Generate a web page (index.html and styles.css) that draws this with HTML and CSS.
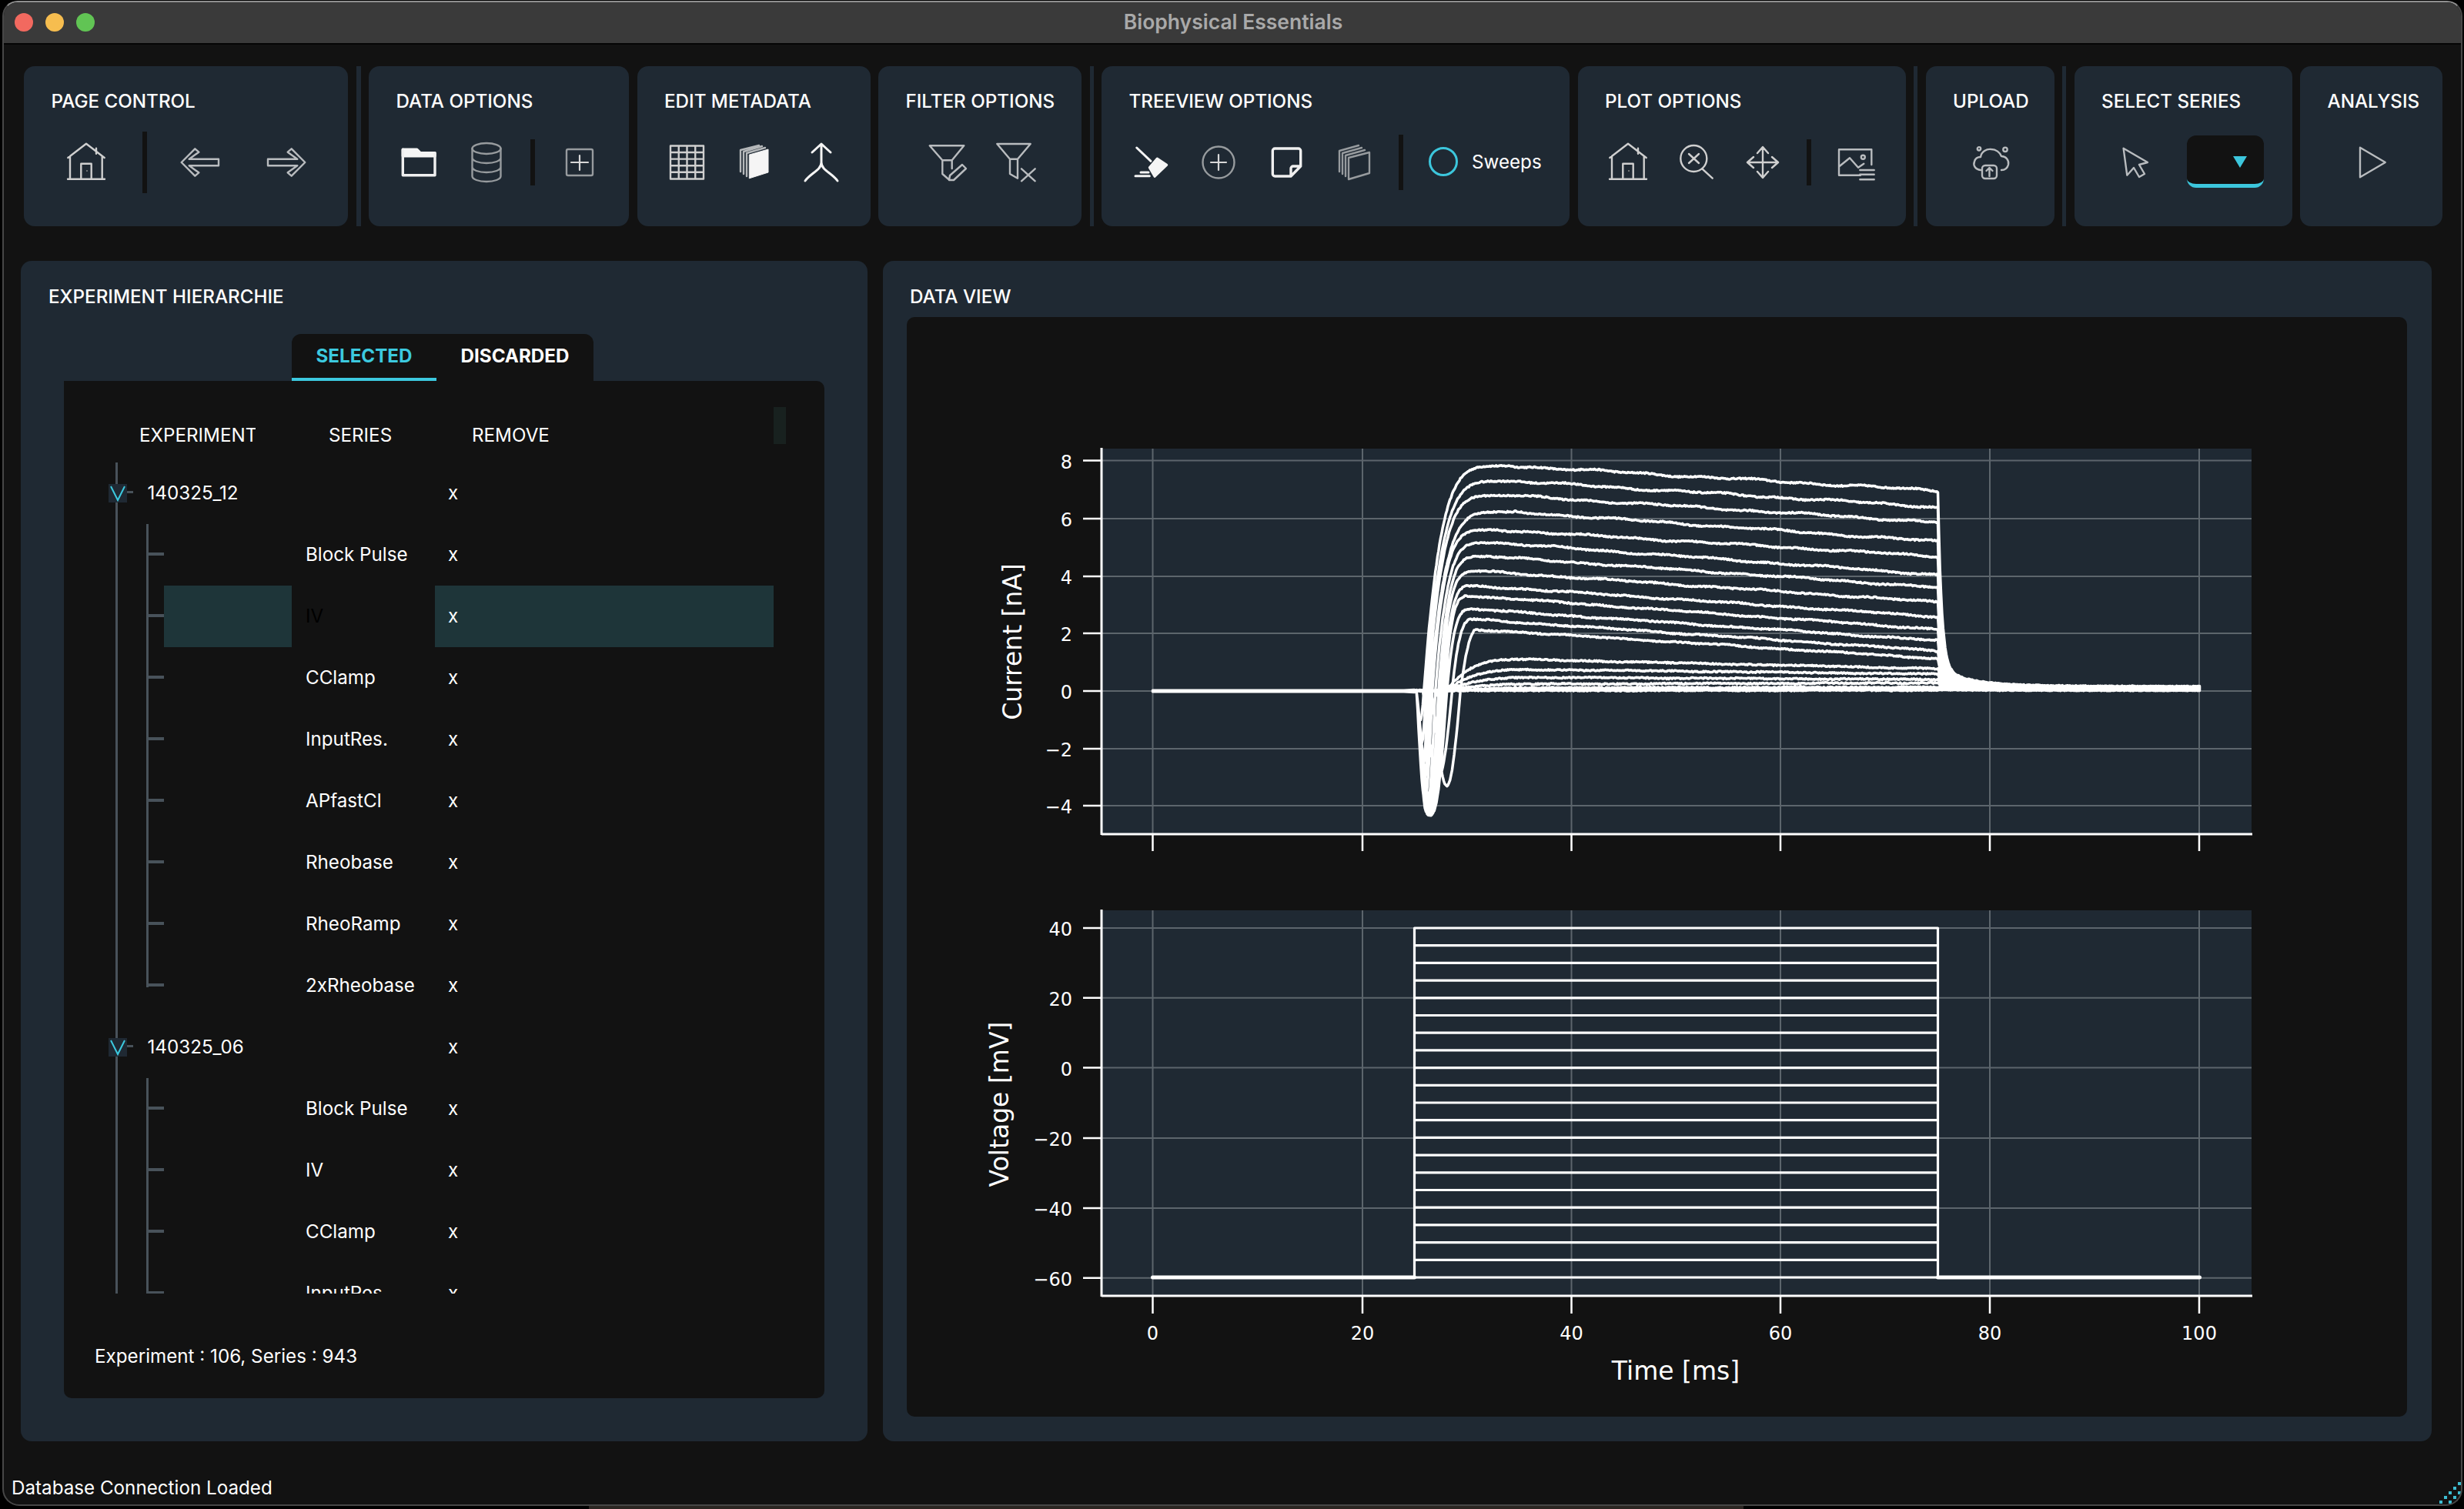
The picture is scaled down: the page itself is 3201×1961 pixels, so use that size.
FILE: index.html
```html
<!DOCTYPE html>
<html lang="en">
<head>
<meta charset="utf-8">
<title>Biophysical Essentials</title>
<link rel="stylesheet" href="styles.css">
</head>
<body>
<div class="window">
  <header class="titlebar">
    <div class="lights"><i class="light red"></i><i class="light yellow"></i><i class="light green"></i></div>
    <div class="app-title">Biophysical Essentials</div>
  </header>

  <section class="toolbar">
    <div class="tool w-page">
      <h3 class="tool-title">PAGE CONTROL</h3>
      <div class="tool-row pad-51 no-gap">
        <svg class="ic" viewBox="0 0 60 60"><path d="M6.3 24 30 5.7 53.7 24M9 22v29.7h41.7V22M6 51.7h48M23.3 51.7V31.7h13.4v20M43 11.7v7"/><circle class="ic-dot" cx="31" cy="41" r="1"/></svg>
        <span class="vsep vsep-80 sep-page"></span>
        <svg class="ic ic-soft" viewBox="0 0 60 60"><path d="M5.7 30 23.3 12.3l5 4.4-12.6 9H54v8.6H15.7l12.6 9-5 4.4z"/></svg>
        <svg class="ic ic-soft arrow-next" viewBox="0 0 60 60"><path d="M54.3 30 36.7 12.3l-5 4.4 12.6 9H6v8.6h38.3l-12.6 9 5 4.4z"/></svg>
      </div>
    </div>
    <span class="panel-sep w6"></span>
    <div class="tool w-data">
      <h3 class="tool-title">DATA OPTIONS</h3>
      <div class="tool-row pad-35">
        <svg class="ic ic-bold" viewBox="0 0 60 60"><path class="ic-fill" d="M9.3 13.3h18.4l4.4 4.4H51v4H9.3z"/><path d="M9.3 13.3v33.4H51v-29"/></svg>
        <svg class="ic ic-gray" viewBox="0 0 60 60"><ellipse cx="30" cy="12" rx="18.5" ry="7"/><path d="M11.5 12v36c0 4 8.300 7 18.500 7s18.500-3 18.500-7V12M11.500 24c0 4 8.300 7 18.500 7s18.500-3 18.500-7M11.500 36c0 4 8.300 7 18.500 7s18.500-3 18.500-7"/></svg>
        <span class="vsep"></span>
        <svg class="ic ic-gray" viewBox="0 0 60 60"><rect x="13" y="13" width="34" height="34" rx="2"/><path class="ic-light" d="M30 21v19M19 30h22"/></svg>
      </div>
    </div>
    <div class="tool w-meta">
      <h3 class="tool-title">EDIT METADATA</h3>
      <div class="tool-row pad-34">
        <svg class="ic" viewBox="0 0 60 60"><path d="M9 8.500h43v43H9zM19.750 8.500v43M30.500 8.500v43M41.250 8.500v43M9 17h43M9 25.600h43M9 34.200h43M9 42.800h43"/></svg>
        <svg class="ic ic-stack" viewBox="0 0 60 60"><path d="M21 48V18l24-7M17 45V16l24-7M13 42V14l24-6"/><path class="ic-fill ic-nostroke" d="M24.700 20 49 13v30l-24.300 7.700z"/></svg>
        <svg class="ic ic-bright" viewBox="0 0 60 60"><path d="M18 17 30 6l12 11M30 6v24c0 10-14 14-21 24M30 30c0 10 14 14 21 24"/></svg>
      </div>
    </div>
    <div class="tool w-filter">
      <h3 class="tool-title">FILTER OPTIONS</h3>
      <div class="tool-row pad-59">
        <svg class="ic ic-soft" viewBox="0 0 60 60"><path d="M7.700 8.300h44.600L36.700 27.300H24.300zM24.300 27.300V45l8 7M36.700 27.300V38M34 47l16-14 5 5-16 15h-6z"/></svg>
        <svg class="ic ic-soft" viewBox="0 0 60 60"><path d="M7.300 6h43.400L34 25.700H24zM24 25.700V45l10 5.700V25.700M39 38.300l17.700 16M56.700 38.300 39 54.300"/></svg>
      </div>
    </div>
    <span class="panel-sep"></span>
    <div class="tool w-tree">
      <h3 class="tool-title">TREEVIEW OPTIONS</h3>
      <div class="tool-row pad-34 gap-28">
        <svg class="ic ic-bright" viewBox="0 0 60 60"><path d="M11.700 11 30 28.300M10 47.700h18.300M17 43h10"/><path class="ic-fill" d="M28.300 36.700 38.300 25l12.400 8.300L35 48.300z"/></svg>
        <svg class="ic ic-gray" viewBox="0 0 60 60"><circle cx="30" cy="30" r="20.500"/><path class="ic-light" d="M30 20v20M20 30h20"/></svg>
        <svg class="ic ic-bold" viewBox="0 0 60 60"><path d="M48.700 35V15a3 3 0 0 0-3-3H15.300a3 3 0 0 0-3 3v30a3 3 0 0 0 3 3H36zM36 48V38a3 3 0 0 1 3-3h9.700"/></svg>
        <svg class="ic ic-gray" viewBox="0 0 60 60"><path d="M23 24l27-7v27l-27 8zM19 48V21l25-7M15 45V18l25-7M11 42V15l25-7"/></svg>
        <span class="vsep vsep-72"></span>
        <div class="radio-group"><i class="radio"></i><span class="radio-label">Sweeps</span></div>
      </div>
    </div>
    <div class="tool w-plot">
      <h3 class="tool-title">PLOT OPTIONS</h3>
      <div class="tool-row pad-35">
        <svg class="ic" viewBox="0 0 60 60"><path d="M6.300 24 30 5.700 53.700 24M9 22v29.700h41.700V22M6 51.700h48M23.300 51.700V31.700h13.400v20M43 11.700v7"/><circle class="ic-dot" cx="31" cy="41" r="1"/></svg>
        <svg class="ic" viewBox="0 0 60 60"><circle cx="28.300" cy="25" r="17"/><path d="M39.300 38.300 52.700 50.700M22 19l13 12M35 19 22 31"/></svg>
        <svg class="ic" viewBox="0 0 60 60"><path d="M30 11v38M11 30h38M23 18l7-8 7 8M23 42l7 8 7-8M18 23l-8 7 8 7M42 23l8 7-8 7"/></svg>
        <span class="vsep"></span>
        <svg class="ic ic-soft" viewBox="0 0 60 60"><path d="M36 46.700H8V13.300h42.300V33M8.700 35 22 24.300l11 12.400 7.300-5M35.300 40h18.400M35.300 45.700h18.400M35.300 52.300h18.400"/><circle cx="39.300" cy="23.300" r="2.500"/></svg>
      </div>
    </div>
    <span class="panel-sep"></span>
    <div class="tool w-upload">
      <h3 class="tool-title">UPLOAD</h3>
      <div class="tool-row pad-55">
        <svg class="ic ic-soft" viewBox="0 0 60 60"><path d="M16 40c-7-1-10-6-8-11 1-4 4-6 8-6 1-7 8-11 14-10 6 0 11 4 13 9 6 0 10 5 9 11-1 4-4 7-9 7"/><rect x="18" y="34" width="19" height="17" rx="4"/><path d="M27.500 48V37M23.500 41l4-4 4 4"/><circle cx="14" cy="12.300" r="2.200"/><circle cx="48" cy="13.300" r="2.700"/></svg>
      </div>
    </div>
    <span class="panel-sep"></span>
    <div class="tool w-select">
      <h3 class="tool-title">SELECT SERIES</h3>
      <div class="tool-row pad-48">
        <svg class="ic ic-soft" viewBox="0 0 60 60"><path d="M15.600 11.700 47 30l-11 3 7 12-7 4-7-12-8.700 9.700z"/></svg>
        <div class="combo"><i class="combo-arrow"></i></div>
      </div>
    </div>
    <div class="tool w-analysis">
      <h3 class="tool-title">ANALYSIS</h3>
      <div class="tool-row pad-64">
        <svg class="ic ic-soft" viewBox="0 0 60 60"><path d="M14 10.700 46.800 30 14 49.300z"/></svg>
      </div>
    </div>
  </section>

  <main class="workspace">
    <section class="panel hierarchy">
      <h3 class="panel-title">EXPERIMENT HIERARCHIE</h3>
      <div class="tabs"><div class="tab active">SELECTED</div><div class="tab">DISCARDED</div></div>
      <div class="tree">
        <div class="tree-head">
          <div class="th th-exp">EXPERIMENT</div>
          <div class="th th-series">SERIES</div>
          <div class="th th-remove">REMOVE</div>
          <div class="th-stub"></div>
        </div>
        <div class="tree-body">
          <div class="row parent"><div class="c-exp"><i class="chev"><svg viewBox="0 0 24 24"><path d="M3 3l9 18 9-18"/></svg></i><span class="parent-name">140325_12</span></div><div class="c-series"></div><div class="c-x">x</div></div>
          <div class="row"><div class="branch"></div><div class="c-name"></div><div class="c-series">Block Pulse</div><div class="c-x">x</div></div>
          <div class="row hl"><div class="branch"></div><div class="c-name"></div><div class="c-series">IV</div><div class="c-x">x</div></div>
          <div class="row"><div class="branch"></div><div class="c-name"></div><div class="c-series">CClamp</div><div class="c-x">x</div></div>
          <div class="row"><div class="branch"></div><div class="c-name"></div><div class="c-series">InputRes.</div><div class="c-x">x</div></div>
          <div class="row"><div class="branch"></div><div class="c-name"></div><div class="c-series">APfastCl</div><div class="c-x">x</div></div>
          <div class="row"><div class="branch"></div><div class="c-name"></div><div class="c-series">Rheobase</div><div class="c-x">x</div></div>
          <div class="row"><div class="branch"></div><div class="c-name"></div><div class="c-series">RheoRamp</div><div class="c-x">x</div></div>
          <div class="row"><div class="branch last"></div><div class="c-name"></div><div class="c-series">2xRheobase</div><div class="c-x">x</div></div>
          <div class="row parent"><div class="c-exp"><i class="chev"><svg viewBox="0 0 24 24"><path d="M3 3l9 18 9-18"/></svg></i><span class="parent-name">140325_06</span></div><div class="c-series"></div><div class="c-x">x</div></div>
          <div class="row"><div class="branch"></div><div class="c-name"></div><div class="c-series">Block Pulse</div><div class="c-x">x</div></div>
          <div class="row"><div class="branch"></div><div class="c-name"></div><div class="c-series">IV</div><div class="c-x">x</div></div>
          <div class="row"><div class="branch"></div><div class="c-name"></div><div class="c-series">CClamp</div><div class="c-x">x</div></div>
          <div class="row"><div class="branch"></div><div class="c-name"></div><div class="c-series">InputRes.</div><div class="c-x">x</div></div>
        </div>
        <div class="tree-count">Experiment : 106, Series : 943</div>
      </div>
    </section>

    <section class="panel dataview">
      <h3 class="panel-title">DATA VIEW</h3>
      <div class="plot-area">
        <svg class="plot" viewBox="1178 412 1949 1429">
          <rect class="axes-bg" x="1431" y="583" width="1494" height="501"/>
          <path class="grid" d="M1497.500 583V1084M1770 583V1084M2041.500 583V1084M2313 583V1084M2585 583V1084M2857 583V1084M1431 598.600H2925M1431 674H2925M1431 749H2925M1431 823H2925M1431 898H2925M1431 973H2925M1431 1047H2925"/>
          <path id="current" class="trace"/>
          <path class="spine" d="M1431 582V1085M1431 1084H2926"/>
          <path class="tick" d="M1407 598.600H1431M1407 674H1431M1407 749H1431M1407 823H1431M1407 898H1431M1407 973H1431M1407 1047H1431M1497.500 1084V1106M1770 1084V1106M2041.500 1084V1106M2313 1084V1106M2585 1084V1106M2857 1084V1106"/>
          <text class="tl tl-y" x="1393" y="609">8</text>
          <text class="tl tl-y" x="1393" y="684">6</text>
          <text class="tl tl-y" x="1393" y="759">4</text>
          <text class="tl tl-y" x="1393" y="833">2</text>
          <text class="tl tl-y" x="1393" y="908">0</text>
          <text class="tl tl-y" x="1393" y="983">−2</text>
          <text class="tl tl-y" x="1393" y="1057">−4</text>
          <text class="axis-label" transform="translate(1327 834) rotate(-90)">Current [nA]</text>

          <rect class="axes-bg" x="1431" y="1183" width="1494" height="501"/>
          <path class="grid" d="M1497.500 1183V1684M1770 1183V1684M2041.500 1183V1684M2313 1183V1684M2585 1183V1684M2857 1183V1684M1431 1206H2925M1431 1296.700H2925M1431 1387.600H2925M1431 1479H2925M1431 1570H2925M1431 1660.700H2925"/>
          <path id="voltage" class="trace trace-v"/>
          <path id="voltage-base" class="trace trace-thick"/>
          <path class="spine" d="M1431 1182V1685M1431 1684H2926"/>
          <path class="tick" d="M1407 1206H1431M1407 1296.700H1431M1407 1387.600H1431M1407 1479H1431M1407 1570H1431M1407 1660.700H1431M1497.500 1684V1707M1770 1684V1707M2041.500 1684V1707M2313 1684V1707M2585 1684V1707M2857 1684V1707"/>
          <text class="tl tl-y" x="1393" y="1216">40</text>
          <text class="tl tl-y" x="1393" y="1307">20</text>
          <text class="tl tl-y" x="1393" y="1398">0</text>
          <text class="tl tl-y" x="1393" y="1489">−20</text>
          <text class="tl tl-y" x="1393" y="1580">−40</text>
          <text class="tl tl-y" x="1393" y="1671">−60</text>
          <text class="tl tl-x" x="1497.500" y="1741">0</text>
          <text class="tl tl-x" x="1770" y="1741">20</text>
          <text class="tl tl-x" x="2041.500" y="1741">40</text>
          <text class="tl tl-x" x="2313" y="1741">60</text>
          <text class="tl tl-x" x="2585" y="1741">80</text>
          <text class="tl tl-x" x="2857" y="1741">100</text>
          <text class="axis-label" transform="translate(1310 1435) rotate(-90)">Voltage [mV]</text>
          <text class="axis-label" x="2177" y="1793">Time [ms]</text>
        </svg>
      </div>
    </section>
  </main>

  <footer class="statusbar">
    <span class="status-text">Database Connection Loaded</span>
    <svg class="grip" viewBox="0 0 28 28"><path d="M24 0h4v4h-4zM18 6h4v4h-4zM12 12h4v4h-4zM24 12h4v4h-4zM6 18h4v4H6zM18 18h4v4h-4zM0 24h4v4H0zM12 24h4v4h-4zM24 24h4v4h-4z"/></svg>
  </footer>
</div>
<div class="desktop-strip"></div>
<script src="script.js"></script>
</body>
</html>
```
FILE: styles.css
```css
* { box-sizing: border-box; }
html, body { margin: 0; padding: 0; background: #000; }
body { width: 3201px; height: 1961px; overflow: hidden; font-family: Inter, "Noto Sans", "Liberation Sans", sans-serif; color: #fff; }
h3 { margin: 0; font-weight: 500; }

.window { margin: 1px 0 0 3px; width: 3196px; height: 1956px; background: #121212; border: 2px solid #474747; border-top-color: #8f8f8f; border-radius: 20px 20px 22px 22px; overflow: hidden; display: flex; flex-direction: column; }
.desktop-strip { width: 1500px; height: 4px; margin-left: 765px; background: #2b2622; }

.titlebar { flex: none; height: 55px; background: #3a3a3a; border-bottom: 2px solid #050505; display: flex; align-items: center; justify-content: center; position: relative; }
.lights { position: absolute; left: 14px; top: 14px; display: flex; gap: 16px; }
.light { display: block; width: 24px; height: 24px; border-radius: 50%; }
.red { background: #f2695f; }
.yellow { background: #f6bd4f; }
.green { background: #61c454; }
.app-title { font-size: 26.500px; font-weight: 600; color: #a9a9a9; margin-top: -3px; margin-left: 2px; }

.toolbar { flex: none; display: flex; gap: 10.5px; margin: 28px 0 0 26px; height: 208px; }
.tool { flex: none; background: #1f2933; border-radius: 14px; padding-top: 31px; }
.w-page { width: 421px; }
.w-data { width: 338px; }
.w-meta { width: 303px; }
.w-filter { width: 264px; }
.w-tree { width: 608px; }
.w-plot { width: 426px; }
.w-upload { width: 167px; }
.w-select { width: 283px; }
.w-analysis { width: 185px; }
.panel-sep { flex: none; width: 5px; background: #1f2933; }
.w6 { width: 6px; }
.tool-title { font-size: 24.200px; line-height: 30px; padding-left: 35.500px; white-space: nowrap; }
.tool-row { display: flex; align-items: center; gap: 27.5px; height: 60px; margin-top: 34px; }
.no-gap { gap: 0; }
.gap-28 { gap: 28px; }
.pad-34 { padding-left: 34px; }
.pad-35 { padding-left: 35px; }
.pad-48 { padding-left: 48px; }
.pad-51 { padding-left: 51px; }
.pad-55 { padding-left: 55px; }
.pad-59 { padding-left: 59px; }
.pad-64 { padding-left: 64px; }

.ic { flex: none; width: 60px; height: 60px; fill: none; stroke: #cfcfcf; stroke-width: 2.4; stroke-linejoin: round; stroke-linecap: round; }
.ic-soft { stroke: #b9bcbf; }
.ic-gray { stroke: #979b9e; }
.ic-stack { stroke: #b5b8ba; }
.ic-bright { stroke: #f4f4f4; stroke-width: 3; }
.ic-bold { stroke: #f0f0f0; stroke-width: 3.4; }
.ic-light { stroke: #d8d8d8; stroke-width: 2.2; }
.ic-fill { fill: #f5f5f5; stroke: #f5f5f5; }
.ic-nostroke { stroke-width: 1; }
.ic-dot { fill: #888; stroke: none; }

.vsep { flex: none; display: block; width: 6px; height: 60px; background: #121212; }
.vsep-80 { height: 80px; }
.vsep-72 { height: 72px; }
.sep-page { margin: 0 39px 0 43px; }
.arrow-next { margin-left: 52px; }

.radio-group { display: flex; align-items: center; gap: 18px; margin-left: 5px; margin-top: -2px; }
.radio { display: block; width: 38px; height: 38px; border: 3px solid #3cc6dc; border-radius: 50%; }
.radio-label { font-size: 24.200px; }

.combo { flex: none; width: 100px; height: 68px; background: #121212; border-radius: 12px; border-bottom: 5px solid #3cc6dc; margin-left: 10.500px; margin-top: -2px; display: flex; justify-content: flex-end; padding: 27px 22px 0 0; }
.combo-arrow { display: block; width: 0; height: 0; border-left: 9px solid transparent; border-right: 9px solid transparent; border-top: 15px solid #3cc6dc; }

.workspace { flex: none; display: flex; gap: 20px; margin: 45px 0 0 22px; height: 1534px; align-items: flex-start; }
.panel { background: #1f2933; border-radius: 14px; flex: none; }
.panel-title { font-size: 24.200px; line-height: 30px; }
.hierarchy { width: 1100px; height: 1534px; padding-top: 32px; }
.hierarchy .panel-title { padding-left: 36px; }
.dataview { width: 2012px; height: 1534px; padding: 32px 32px 0 31px; }
.dataview .panel-title { padding-left: 4px; }

.tabs { display: flex; width: 392px; height: 61px; margin: 33px 0 0 352px; background: #121212; border-radius: 12px 12px 0 0; font-size: 24.200px; font-weight: 700; }
.tab { width: 204px; text-align: center; line-height: 58px; }
.tab.active { width: 188px; color: #3cc9df; border-bottom: 4px solid #3cc9df; border-radius: 12px 0 0 0; }

.tree { width: 988px; height: 1322px; margin-left: 56px; background: #121212; border-radius: 0 10px 10px 10px; padding-top: 34px; font-size: 24.200px; }
.tree-head { display: grid; grid-template-columns: 249px 187px 486px 16px; height: 72px; }
.th { white-space: nowrap; overflow: hidden; line-height: 74px; }
.th-exp { padding-left: 98px; }
.th-series { padding-left: 95px; }
.th-remove { padding-left: 94px; }
.th-stub { height: 48px; background: #18211f; }

.tree-body { position: relative; height: 1080px; overflow: hidden; }
.tree-body::before { content: ""; position: absolute; left: 67px; top: 0; bottom: 0; width: 3px; background: #48525a; }
.row { display: grid; grid-template-columns: 130px 166px 186px 440px; height: 80px; line-height: 80px; }
.parent { grid-template-columns: 296px 186px 440px; }
.c-exp { position: relative; padding-left: 108.500px; }
.parent-name { white-space: nowrap; }
.chev { position: absolute; left: 58px; top: 28px; width: 24px; height: 24px; background: #1f2933; display: block; z-index: 1; }
.chev::after { content: ""; position: absolute; left: 24px; top: 9px; width: 8px; height: 3px; background: #48525a; }
.chev svg { display: block; width: 24px; height: 24px; fill: none; stroke: #3cc9df; stroke-width: 2; }
.branch { position: relative; }
.branch::before { content: ""; position: absolute; left: 107px; top: 0; bottom: 0; width: 3px; background: #48525a; }
.branch.last::before { bottom: 38px; }
.branch::after { content: ""; position: absolute; left: 107px; right: 0; top: 37px; height: 4px; background: #48525a; }
.c-series { padding-left: 18px; white-space: nowrap; }
.c-x { padding-left: 17px; }
.hl .c-name, .hl .c-x { background: #1e3539; }
.hl .c-series { color: #000; }
.tree-count { padding-left: 40px; margin-top: 67px; line-height: 30px; }

.plot-area { width: 1949px; height: 1429px; margin-top: 11px; background: #121212; border-radius: 10px; }
.plot { display: block; width: 1949px; height: 1429px; }
.axes-bg { fill: #1f2933; }
.grid { fill: none; stroke: #5c656c; stroke-width: 2; }
.trace { fill: none; stroke: #fff; stroke-width: 3.5; stroke-linejoin: round; stroke-linecap: round; }
.trace-v { stroke-width: 3.2; }
.trace-thick { stroke-width: 5; }
.spine { fill: none; stroke: #fff; stroke-width: 3; }
.tick { fill: none; stroke: #fff; stroke-width: 2.5; }
.tl { font-family: "DejaVu Sans", sans-serif; font-size: 24px; fill: #fff; }
.tl-y { text-anchor: end; }
.tl-x { text-anchor: middle; }
.axis-label { font-family: "DejaVu Sans", sans-serif; font-size: 33px; fill: #fff; text-anchor: middle; }

.statusbar { flex: 1; position: relative; margin-top: 46px; padding-left: 10px; }
.status-text { font-size: 24.200px; line-height: 30px; display: block; }
.grip { position: absolute; right: 0; top: 7px; width: 28px; height: 28px; fill: #3dbdd2; }
```
FILE: script.js
```js
// Traces of the current and voltage plots, computed from a simple sweep model.
(function () {
  var tx = function (t) { return 1497.5 + 13.6 * t; };
  var iy = function (i) { return 898 - 37.45 * i; };
  var vy = function (v) { return 1387.6 - 4.54 * v; };

  var seed = 12345;
  function rnd() { seed = (seed * 16807) % 2147483647; return seed / 2147483647 - 0.5; }

  var P = [7.83,7.3,6.8,6.23,5.6,5.16,4.68,4.16,3.66,3.3,2.84,2.49,2.13,1.09,0.74,0.46,0.23,0.1,0.05,0.02,0];
  var E = [6.97,6.4,5.87,5.2,4.68,4.04,3.6,3.09,2.58,2.14,1.75,1.39,1.12,0.77,0.58,0.39,0.27,0.12,0.08,0.04,0.01];
  var T0 = [25.9,26.1,26.3,26.5,26.7,27,27.3,27.5,27.7,27.9,28.1,28.6,29.4,28,28,28,28,28.5,29,29,29];
  var TP = [34.5,34.5,34,34.5,33,32.5,32,31.5,30.7,30.4,30.5,30.6,30.9,35,36,37,38,40,40,40,40];
  var EX = [5.5,5.5,5.5,5.5,5.5,5,5,5,4,4,3.5,3,2,3,3,3,3,3,3,3,3];
  var A = [1,1.8,2.6,3.2,3.8,4.2,4.3,4.3,4.3,4.3,4.2,3,3.3,0.3,0.15,0.1,0.05,0,0,0,0];
  var DS = [25.2,25.2,25.2,25.2,25.2,25.2,25.2,25.2,25.2,25.2,25.2,25.8,26.6,27,27,27,27,27,27,27,27];

  function current(k, t, ph) {
    var p = P[k], e = E[k], t0 = T0[k], tp = TP[k], flat = (k - 10) * 0.002;
    if (t < DS[k]) return flat;
    if (t < t0) return flat - A[k] * Math.sin(Math.PI * Math.pow((t - DS[k]) / (t0 - DS[k]), 1.1));
    if (t < tp) {
      var u = (t - t0) / (tp - t0);
      return flat + p * (1 - Math.pow(1 - u, EX[k]));
    }
    var wander = 0.018 * (p / 7.83 + 0.3) * (Math.sin(t * 0.47 + ph) + Math.sin(t * 1.23 + 2 * ph));
    if (t < 75) return flat + p + (e - p) * (t - tp) / (75 - tp) + wander;
    var dt = t - 75, s = Math.sqrt(e / 7);
    var b = 0.2 * s, c = 0.65 * s;
    return flat + b * (1 - dt / 200) + (e - b - c) * Math.exp(-dt / 0.35) + c * Math.exp(-dt / 2.8);
  }

  var d = [];
  for (var k = 0; k < P.length; k++) {
    var pts = [], ph = k * 1.7;
    for (var t = 0; t <= 100.001; t += t < 25 ? 1 : 0.1) {
      var n = t < 25 ? 0 : rnd() * 0.045;
      pts.push(tx(t).toFixed(1) + ' ' + iy(current(k, t, ph) + n).toFixed(1));
    }
    d.push('M' + pts.join('L'));
  }
  document.getElementById('current').setAttribute('d', d.join(''));

  var v = [];
  for (var m = 40; m >= -60; m -= 5) v.push('M' + tx(25) + ' ' + vy(m) + 'H' + tx(75));
  v.push('M' + tx(25) + ' ' + vy(40) + 'V' + vy(-60));
  v.push('M' + tx(75) + ' ' + vy(40) + 'V' + vy(-60));
  document.getElementById('voltage').setAttribute('d', v.join(''));
  document.getElementById('voltage-base').setAttribute('d',
    'M' + tx(0) + ' ' + vy(-60) + 'H' + tx(25) + 'M' + tx(75) + ' ' + vy(-60) + 'H' + tx(100));
})();
```
